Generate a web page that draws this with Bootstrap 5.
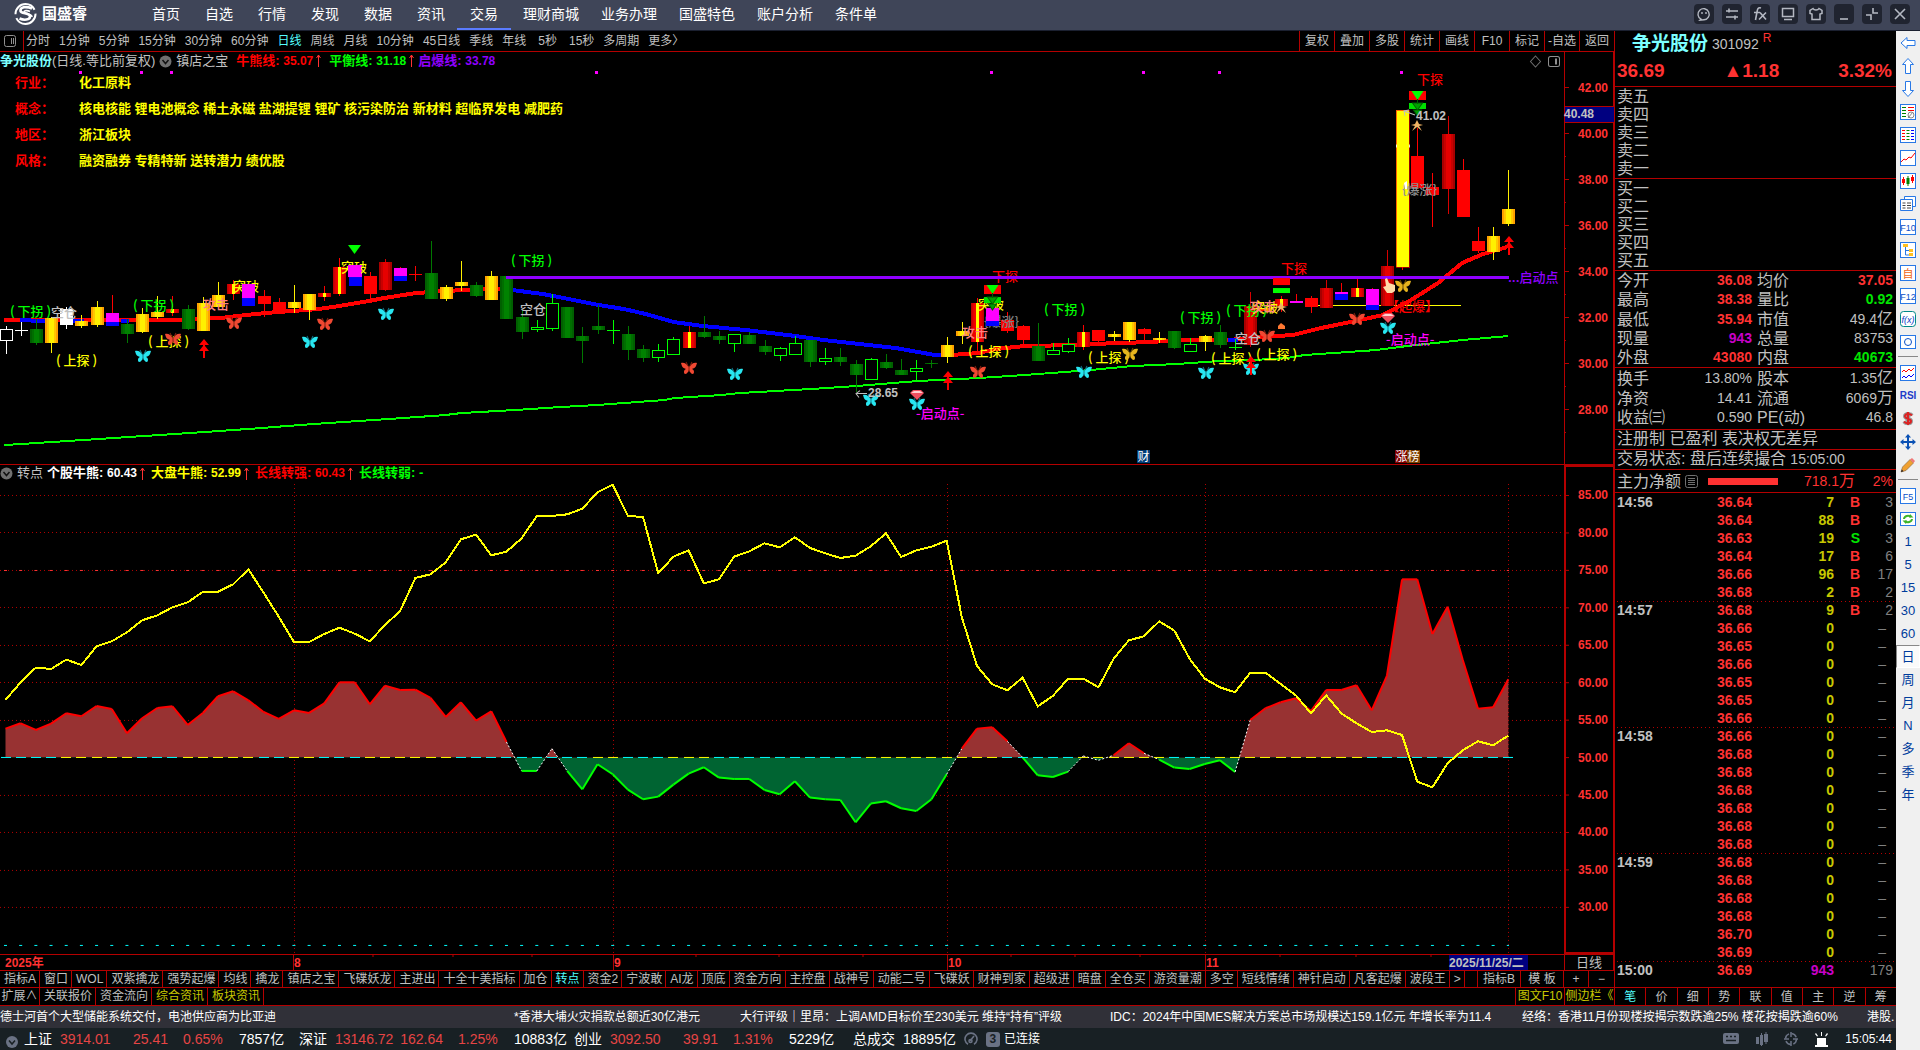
<!DOCTYPE html>
<html lang="zh-CN">
<head>
<meta charset="utf-8">
<meta name="viewport" content="width=device-width, initial-scale=1">
<title>国盛睿 - 争光股份</title>
<link href="https://cdn.jsdelivr.net/npm/bootstrap@5.3.0/dist/css/bootstrap.min.css" rel="stylesheet">
<style>
:root{--line:#b40000;--txt:#c0c0c0;--up:#ff3232;--dn:#00e600;--cyan:#54fcfc}
body{background:#000;color:var(--txt);font-family:"Liberation Sans","Noto Sans CJK SC",sans-serif;font-size:12px;line-height:16px;min-height:100vh;overflow:hidden}
button{background:none;border:0;padding:0;color:inherit;font:inherit;white-space:nowrap}
a{color:inherit;text-decoration:none}
svg{display:block}
.bd-b{border-bottom:1px solid var(--line)}
/* title bar */
.titlebar{height:31px;background:#3f4558;border-bottom:1px solid #1b2030;color:#fff;font-size:14px}
.logo{margin:2px 0 0 13px}
.brand-name{font-size:15px;font-weight:700;width:66px;line-height:27px}
.mainnav{height:30px;line-height:29px;gap:25px;margin-left:48px}
.mainnav.wide{gap:22px;margin-left:25px}
.mainnav a{height:30px;position:relative;white-space:nowrap}
.mainnav a.on::after{content:"";position:absolute;left:-13px;right:-13px;bottom:0;height:2px;background:#5b7cff}
.winbtns{gap:8px;padding-right:10px}
.winbtns button{width:20px;height:20px;border-radius:4px;background:#202430;color:#b4b8c2}
/* period bar */
.period{height:21px;line-height:20px}
.period .lst{gap:9px;padding-left:2px}
.period .sec{margin-left:3px}
.period .ico{width:24px;height:20px;border-right:1px solid var(--line);padding:4px}
.ops button{width:35px;height:20px;border-left:1px solid var(--line)}
.on-c{color:var(--cyan)}
/* charts */
.chart{position:relative;min-height:0;overflow:hidden}
.chart>svg{position:absolute;inset:0;width:100%;height:100%}
.c1{flex:413 1 0}
.c2{flex:490 1 0}
.hdr{position:relative;height:18px;line-height:18px;font-size:13px;white-space:nowrap}
.c2 .hdr{line-height:16px}
.hdr b{font-weight:700}
.hdr i{font-style:normal;font-size:12px;font-weight:700}
.hdr svg{flex:none}
.hdr .knob{margin-top:3px}
.c2 .hdr .knob{margin-top:2px}
.tags{position:relative;font-size:13px;font-weight:700;color:#ff0;margin:4px 0 0 15px;display:grid;grid-template-columns:64px auto;grid-auto-rows:26px;line-height:18px}
.tags dt{color:#f00;font-weight:700}
.tags dd{margin:0}
svg text{font-family:"Liberation Sans","Noto Sans CJK SC",sans-serif;dominant-baseline:central}
svg text.cj{font-family:"Noto Sans CJK SC",sans-serif;font-size:13px;font-weight:500}
svg text.num{font-size:12px;font-weight:700}
/* bottom strips */
.axis{height:16px;position:relative}
.axis svg{position:absolute;inset:0;width:100%;height:100%}
.tabs1{height:17px;line-height:16px}
.tabs1 button,.tabs2 button{padding:0 3px 0 4px;border-right:1px solid var(--line)}
.tabs2{height:18px;line-height:17px}
.tabs2 .fst{padding:0;width:40px}
.tabs2 .rt{padding:0;width:49px;overflow:visible}
.tabs1 .tail button{padding:0;width:25px}
.tabs1 .tail button.w{width:43px}
.tabs1 .tail{border-left:1px solid var(--line)}
.yl{color:#c8c800}
.news{height:22px;background:#303038;color:#fff;line-height:22px;white-space:nowrap;overflow:hidden}
.news a{flex:none}
.status{height:22px;background:#182024;color:#fff;font-size:14px;line-height:24px;white-space:nowrap}
.idx{display:grid;grid-template-columns:36px 60px 48px 71px 60px}
.idx :nth-child(n+2):nth-child(-n+4){color:#e64545}
.idx :nth-child(3){text-align:right}
.idx :nth-child(4){padding-left:15px}
.cnt{width:14px;height:15px;line-height:15px;border-radius:3px;background:#6a7284;color:#182024;font-size:12px;text-align:center;font-weight:700}
/* quote panel */
.quote{width:282px;border-left:1px solid var(--line);font-size:16px;line-height:18px}
.quote section{padding-left:2px}
.qname{font-size:19px;font-weight:700;color:#7cffff;margin:0;line-height:26px}
.qcode{font-size:14px}
.big{font-size:19px;font-weight:700;color:var(--up);line-height:28px;padding-right:4px}
.lv{height:92px;padding-top:1px}
table{border-collapse:collapse;table-layout:fixed;width:100%}
th{font-weight:400}
td,th{padding:0;white-space:nowrap}
.inf{line-height:19px}
.inf td{font-size:14px;text-align:right}
.inf td:last-child{padding-right:3px}
.inf th+td+th{padding-left:5px}
.inf .cj16{font-size:16px}
.bold td{font-weight:700}
.up{color:var(--up)}.dn{color:var(--dn)}.mg{color:#c800c8}
.line20{height:20px;line-height:18px;white-space:nowrap}
.line20 span{font-size:14px}
.flow{height:23px;line-height:21px}
.flowbar{width:70px;height:7px;background:var(--up);margin-left:10px}
.ticks{font-size:14px;line-height:18px;font-weight:700}
.ticks tr{height:18px}
.ticks tr.cut{background:repeating-linear-gradient(90deg,#b40000 0 1px,transparent 1px 4px) 0 0/100% 1px no-repeat}
.ticks td{text-align:right}
.ticks td:first-child{text-align:left}
.ticks .v{color:#c8c800}
.ticks .n{color:#808080;font-weight:400;padding-right:3px}
.ticks .dash{padding-right:10px}
.qtabs{height:19px;border-top:1px solid var(--line);font-size:12px;line-height:16px}
.qtabs button{flex:1;border-right:1px solid var(--line)}
.qtabs button:last-child{border-right:0}
/* tool strip */
.tools{width:24px;background:#f0f0f0;color:#003c9c;font-size:13px}
.tools button{width:24px;height:23px;display:flex;align-items:center;justify-content:center}
.tools hr{width:20px;margin:3px 2px 4px;border-top:1px solid #888;opacity:1}
.tools .press{background:#fafafa;border:1px solid #fff;border-top-color:#888;border-left-color:#888}
</style>
<script src="https://cdn.jsdelivr.net/npm/bootstrap@5.3.0/dist/js/bootstrap.bundle.min.js"></script>
</head>
<body class="d-flex flex-column vh-100">
<header class="titlebar d-flex flex-shrink-0">
  <svg class="logo" width="25" height="24" viewBox="0 0 25 24" fill="none" stroke="#fff"><circle cx="12.500" cy="12" r="10" stroke-width="2" stroke-dasharray="27 4"/><path d="M19 6.500C13 4 7 5 7.500 9c.4 3 9.500 1.500 9.500 5.500 0 3.500-6 4-10.500 2" stroke-width="2.600"/><path d="M17 9.500c-3-1.500-6-1-6 .5 0 1.500 8 1.500 8 5" stroke-width="1.600"/></svg>
  <span class="brand-name ps-1">国盛睿</span>
  <nav class="mainnav d-flex"><a href="#">首页</a><a href="#">自选</a><a href="#">行情</a><a href="#">发现</a><a href="#">数据</a><a href="#">资讯</a><a href="#" class="on">交易</a></nav>
  <nav class="mainnav wide d-flex"><a href="#">理财商城</a><a href="#">业务办理</a><a href="#">国盛特色</a><a href="#">账户分析</a><a href="#">条件单</a></nav>
  <div class="winbtns d-flex ms-auto pt-1">
    <button aria-label="客服"><svg width="20" height="20" fill="none" stroke="currentColor" stroke-width="1.400"><path d="M7 15.200a5.600 5.600 0 1 1 3 .6l-4 .4z"/><path d="M8 8v2M12 8v2"/></svg></button>
    <button aria-label="切换"><svg width="20" height="20" fill="none" stroke="currentColor" stroke-width="1.600"><path d="M4 7h12M4 13h12M7 4.500v4M13 11.500v4"/></svg></button>
    <button aria-label="公式"><svg width="20" height="20" fill="none" stroke="currentColor" stroke-width="1.600"><path d="M11 4c-3-1-3.500 1-4 4l-1.500 8M4 8.500h6M10 8.500l6 7M16 8.500l-7 7"/></svg></button>
    <button aria-label="屏幕"><svg width="20" height="20" fill="none" stroke="currentColor" stroke-width="1.500"><rect x="4.500" y="4.500" width="11" height="8"/><path d="M6 15.500h8"/></svg></button>
    <button aria-label="皮肤"><svg width="20" height="20" fill="none" stroke="currentColor" stroke-width="1.500"><path d="M7 4.500 4 6.500v3l2 .5v5.500h8V10l2-.5v-3l-3-2c-1 2-5 2-6 0z"/></svg></button>
    <button aria-label="最小化"><svg width="20" height="20" stroke="currentColor" stroke-width="1.600"><path d="M6 15h8"/></svg></button>
    <button aria-label="还原"><svg width="20" height="20" fill="none" stroke="currentColor" stroke-width="1.600"><path d="M11 4v5h5M9 16v-5H4"/></svg></button>
    <button aria-label="关闭"><svg width="20" height="20" stroke="currentColor" stroke-width="1.600"><path d="m5 5 10 10M15 5 5 15"/></svg></button>
  </div>
</header>

<div class="d-flex flex-grow-1" style="min-height:0">
 <div class="d-flex flex-column flex-grow-1" style="min-width:0">
  <div class="d-flex flex-grow-1" style="min-height:0">
   <main class="d-flex flex-column flex-grow-1" style="min-width:0">
    <div class="period bd-b d-flex flex-shrink-0">
      <button class="ico" aria-label="侧栏"><svg width="12" height="12" fill="none" stroke="#909090"><rect x=".5" y=".5" width="11" height="11" rx="2"/><path d="M7.500 3v6M9.500 3v6" stroke-width="1"/></svg></button>
      <div class="lst d-flex"><button>分时</button><button>1分钟</button><button>5分钟</button><button>15分钟</button><button>30分钟</button><button>60分钟</button><button class="on-c">日线</button><button>周线</button><button>月线</button><button>10分钟</button><button>45日线</button><button>季线</button><button>年线</button><button class="sec">5秒</button><button class="sec">15秒</button><button>多周期</button><button>更多〉</button></div>
      <div class="ops d-flex ms-auto"><button>复权</button><button>叠加</button><button>多股</button><button>统计</button><button>画线</button><button>F10</button><button>标记</button><button>-自选</button><button>返回</button></div>
    </div>

    <section class="chart c1 bd-b">
      <svg id="k"></svg>
      <div class="hdr d-flex">
        <b style="color:#7cffff">争光股份</b><span>(日线.等比前复权)</span>
        <svg class="knob ms-1 me-1" width="13" height="13"><circle cx="6.500" cy="6.500" r="6" fill="#707070"/><path d="m3.500 5 3 3.500 3-3.500" fill="none" stroke="#111" stroke-width="1.500"/></svg>
        <span>镇店之宝</span>
        <b class="ms-2" style="color:#f00">牛熊线: <i>35.07</i></b><svg width="12" height="18"><path d="M5.500 3v12M3.500 6l2-3 2 3" fill="none" stroke="#ff3232"/></svg>
        <b class="ms-1" style="color:#0f0">平衡线: <i>31.18</i></b><svg width="12" height="18"><path d="M5.500 3v12M3.500 6l2-3 2 3" fill="none" stroke="#ff3232"/></svg>
        <b style="color:#9000ff">启爆线: <i>33.78</i></b>
      </div>
      <dl class="tags"><dt>行业：</dt><dd>化工原料</dd><dt>概念：</dt><dd>核电核能 锂电池概念 稀土永磁 盐湖提锂 锂矿 核污染防治 新材料 超临界发电 减肥药</dd><dt>地区：</dt><dd>浙江板块</dd><dt>风格：</dt><dd>融资融券 专精特新 送转潜力 绩优股</dd></dl>
    </section>

    <section class="chart c2 bd-b">
      <svg id="m"></svg>
      <div class="hdr d-flex">
        <svg class="knob me-1" width="13" height="13"><circle cx="6.500" cy="6.500" r="6" fill="#707070"/><path d="m3.500 5 3 3.500 3-3.500" fill="none" stroke="#111" stroke-width="1.500"/></svg>
        <span>转点</span>
        <b class="ms-1 text-white">个股牛熊: <i>60.43</i></b><svg width="10" height="18"><path d="M5.500 3v12M3.500 6l2-3 2 3" fill="none" stroke="#ff3232"/></svg>
        <b class="ms-1" style="color:#ff0">大盘牛熊: <i>52.99</i></b><svg width="10" height="18"><path d="M5.500 3v12M3.500 6l2-3 2 3" fill="none" stroke="#ff3232"/></svg>
        <b class="ms-1" style="color:#f00">长线转强: <i>60.43</i></b><svg width="10" height="18"><path d="M5.500 3v12M3.500 6l2-3 2 3" fill="none" stroke="#ff3232"/></svg>
        <b class="ms-1" style="color:#0f0">长线转弱: -</b>
      </div>
    </section>
    <div class="axis bd-b flex-shrink-0"><svg id="t"></svg></div>
    <div class="tabs1 bd-b d-flex flex-shrink-0" id="tabs1"></div>
    <div class="tabs2 bd-b d-flex flex-shrink-0"><button class="fst">扩展∧</button><button>关联报价</button><button>资金流向</button><button class="yl">综合资讯</button><button class="yl">板块资讯</button>
      <div class="d-flex ms-auto yl" style="border-left:1px solid var(--line)"><button class="rt">图文F10</button><button class="rt border-0">侧边栏《</button></div></div>
   </main>

   <aside class="quote d-flex flex-column flex-shrink-0">
    <section class="bd-b" style="height:56px">
      <div class="d-flex align-items-center" style="padding-left:15px"><h1 class="qname">争光股份</h1><span class="qcode ms-1">301092</span><sup class="up ms-1" style="font-size:12px">R</sup></div>
      <div class="big d-flex justify-content-between"><span>36.69</span><span>▲1.18</span><span>3.32%</span></div>
    </section>
    <section class="lv bd-b"><div>卖五</div><div>卖四</div><div>卖三</div><div>卖二</div><div>卖一</div></section>
    <section class="lv bd-b"><div>买一</div><div>买二</div><div>买三</div><div>买四</div><div>买五</div></section>
    <section class="bd-b" style="height:97px"><table class="inf bold"><colgroup><col style="width:60px"><col style="width:75px"><col style="width:60px"><col></colgroup>
      <tr><th>今开</th><td class="up">36.08</td><th>均价</th><td class="up">37.05</td></tr>
      <tr><th>最高</th><td class="up">38.38</td><th>量比</th><td class="dn">0.92</td></tr>
      <tr><th>最低</th><td class="up">35.94</td><th>市值</th><td class="fw-normal">49.4<span class="cj16">亿</span></td></tr>
      <tr><th>现量</th><td class="mg">943</td><th>总量</th><td class="fw-normal">83753</td></tr>
      <tr><th>外盘</th><td class="up">43080</td><th>内盘</th><td class="dn">40673</td></tr></table></section>
    <section class="bd-b" style="height:62px"><table class="inf"><colgroup><col style="width:60px"><col style="width:75px"><col style="width:60px"><col></colgroup>
      <tr><th>换手</th><td>13.80%</td><th>股本</th><td>1.35<span class="cj16">亿</span></td></tr>
      <tr><th>净资</th><td>14.41</td><th>流通</th><td>6069<span class="cj16">万</span></td></tr>
      <tr><th>收益㈢</th><td>0.590</td><th>PE(动)</th><td>46.8</td></tr></table></section>
    <section class="line20 bd-b">注册制 已盈利 表决权无差异</section>
    <section class="line20 bd-b">交易状态: 盘后连续撮合 <span>15:05:00</span></section>
    <section class="flow bd-b d-flex align-items-center">主力净额<svg class="ms-1" width="13" height="13" stroke="#707070" fill="none"><rect x=".5" y=".5" width="12" height="12" rx="2"/><path d="M3 3.500h7M3 5.500h7M3 7.500h7M3 9.500h7"/></svg><span class="flowbar"></span><span class="up ms-auto" style="font-size:14px">718.1<span style="font-size:16px">万</span></span><span class="up text-end" style="font-size:14px;width:41px;padding-right:3px">2%</span></section>
    <section class="flex-grow-1"><table class="ticks"><colgroup><col style="width:60px"><col style="width:75px"><col style="width:82px"><col style="width:26px"><col></colgroup><tbody id="ticks"></tbody></table></section>
    <div class="qtabs bd-b d-flex"><button class="on-c">笔</button><button>价</button><button>细</button><button>势</button><button>联</button><button>值</button><button>主</button><button>逆</button><button>筹</button></div>
   </aside>
  </div>

  <div class="news d-flex flex-shrink-0"><a href="#" style="width:514px">德士河首个大型储能系统交付，电池供应商为比亚迪</a><a href="#" style="width:226px">*香港大埔火灾捐款总额近30亿港元</a><a href="#" style="width:370px">大行评级｜里昂：上调AMD目标价至230美元 维持“持有”评级</a><a href="#" style="width:412px">IDC：2024年中国MES解决方案总市场规模达159.1亿元 年增长率为11.4</a><a href="#" style="width:345px">经络：香港11月份现楼按揭宗数跌逾25% 楼花按揭跌逾60%</a><a href="#">港股.</a></div>
  <footer class="status d-flex flex-shrink-0 align-items-center">
    <svg width="24" height="22"><circle cx="12" cy="14" r="6" fill="#6a7284"/><path d="m9 12.500 3 3.500 3-3.500" fill="none" stroke="#182024" stroke-width="1.500"/></svg>
    <div class="idx"><span>上证</span><span>3914.01</span><span>25.41</span><span>0.65%</span><span>7857亿</span></div>
    <div class="idx"><span>深证</span><span>13146.72</span><span>162.64</span><span>1.25%</span><span>10883亿</span></div>
    <div class="idx"><span>创业</span><span>3092.50</span><span>39.91</span><span>1.31%</span><span>5229亿</span></div>
    <span class="ms-1">总成交</span><span class="ms-2">18895亿</span>
    <svg class="ms-2 me-2" width="14" height="14" fill="none" stroke="#6a7284" stroke-width="1.600"><path d="M4 12.300a6 6 0 1 1 6 0M6 9l4-5"/><circle cx="6.500" cy="9" r="1.500"/></svg>
    <span class="cnt">3</span><span class="ms-1" style="font-size:12px">已连接</span>
    <div class="d-flex ms-auto align-items-center pe-1">
      <svg width="17" height="12" class="me-3"><rect width="16" height="11" rx="2" fill="#6a7284"/><path d="M3 3.500h2M7 3.500h2M11 3.500h2M3 7.500h10" stroke="#182024" stroke-width="1.500"/></svg>
      <svg width="12" height="14" class="me-3" fill="#6a7284"><path d="M0 5h3v7H0zM4 3h3v10H4zM8 2h4v8H8zM5 1h1v13H5zM9.500 0h1v12h-1z"/></svg>
      <svg width="14" height="14" class="me-3" fill="none" stroke="#6a7284" stroke-width="1.500"><circle cx="7" cy="7" r="5.500" stroke-dasharray="6 2.600"/><path d="M7 0v5M7 9v5M0 7h5M9 7h5"/></svg>
      <svg width="15" height="15" class="me-3" fill="#fff"><path d="M3 6h9v7h2v2H1v-2h2zM7 0h1v4H7zM2 1l2 3-1 .5L1 2zM13 1l-2 3 1 .5L14 2z"/></svg>
      <span style="font-size:12px">15:05:44</span>
    </div>
  </footer>
 </div>

 <nav class="tools d-flex flex-column flex-shrink-0" id="tools" aria-label="工具"></nav>
</div>

<script>
/* ---------- tabs, ticks, tool strip ---------- */
const tabNames='指标A 窗口 WOL 双紫擒龙 强势起爆 均线 擒龙 镇店之宝 飞碟妖龙 主进出 十全十美指标 加仓 转点 资金2 宁波敢 AI龙 顶底 资金方向 主控盘 战神号 动能二号 飞碟妖 财神到家 超级进 暗盘 全仓买 游资量潮 多空 短线情绪 神针启动 凡客起爆 波段王'.split(' ');
document.getElementById('tabs1').innerHTML=tabNames.map(n=>`<button${n=='转点'?' class="on-c"':''}>${n}</button>`).join('')+
 '<button>&gt;</button><div class="tail d-flex ms-auto"><button class="w">指标B</button><button class="w">模 板</button><button>+</button><button class="border-0">−</button></div>';

const tk=[['14:56','36.64',7,'B',3],['','36.64',88,'B',8],['','36.63',19,'S',3],['','36.64',17,'B',6],['','36.66',96,'B',17],['','36.68',2,'B',2],
['14:57','36.68',9,'B',2],...['36.66','36.65','36.66','36.65','36.65','36.66'].map(p=>['',p,0]),
['14:58','36.66',0],...Array(6).fill(['','36.68',0]),
['14:59','36.68',0],...['36.68','36.68','36.68','36.70','36.69'].map(p=>['',p,0]),['15:00','36.69',943,'',179]];
document.getElementById('ticks').innerHTML=tk.map((r,i)=>`<tr${r[0]&&i?' class="cut"':''}><td>${r[0]}</td><td class="up">${r[1]}</td><td class="${r[2]==943?'mg':'v'}">${r[2]}</td><td class="${r[3]=='S'?'dn':'up'}">${r[3]||''}</td><td class="n${r[4]?'':' dash'}">${r[4]||'–'}</td></tr>`).join('');

const box='<rect x=".5" y=".5" width="15" height="15" fill="#fff" stroke="#2878e6"/>';
const S=s=>`<svg width="16" height="16" fill="none">${s}</svg>`;
const lab=(t,c='#0a50c8',z=9)=>S(box+`<text x="8" y="8.500" text-anchor="middle" font-size="${z}" fill="${c}">${t}</text>`);
const icons=[
 S('<path d="M1 8l6-5.500v3h8v5H7v3z" stroke="#2878e6" fill="#fff"/>'),
 S('<path d="M8 .5l5.500 6h-3v9h-5v-9h-3z" stroke="#2878e6" fill="#fff"/>'),
 S('<path d="M8 15.500l5.500-6h-3v-9h-5v9h-3z" stroke="#2878e6" fill="#fff"/>'),
 S(box+'<path d="M2 3.500h4M2 6.500h4M2 9.500h4M2 12.500h4" stroke="green"/><path d="M8 3.500h6M8 6.500h6" stroke="red"/><circle cx="11" cy="11" r="3" stroke="#888"/><path d="m8 14 5-6" stroke="#888"/>'),
 S(box+'<path d="M2 3.500h3M2 6.500h3M2 9.500h3M2 12.500h3" stroke="red"/><path d="M6.500 3.500h3M6.500 6.500h3M6.500 9.500h3M6.500 12.500h3" stroke="green"/><path d="M11 3.500h3M11 6.500h3M11 9.500h3M11 12.500h3" stroke="#00f"/>'),
 S(box+'<path d="m1 12 3-3 2 1 3-3 2 1 4-5" stroke="red"/>'),
 S(box+'<path d="M3.500 4v8M12.500 2v8" stroke="red"/><path d="M2 6h3v4H2zM11 4h3v4h-3z" fill="red"/><path d="M8 3v10" stroke="green"/><path d="M6.500 5h3v6h-3z" fill="green"/>'),
 S('<path d="M4.500.5h11v10h-11z" stroke="#2878e6" fill="#fff"/><path d="M.5 3.500h12v11H.5z" stroke="#2878e6" fill="#fff"/><path d="M2.500 7h3M7 7h4M2.500 9.500h3M7 9.500h4M2.500 12h3M7 12h4" stroke="#444"/>'),
 lab('F10'),
 S(box+'<path d="M5.500 5v8h4M5.500 8.500h4" stroke="#2878e6"/><path d="M3 2h5v3H3zM9 7h4v3H9zM9 11h4v3H9z" fill="#ffc020"/>'),
 lab('自','#f06414',11),lab('F12'),
 S('<rect x=".5" y=".5" width="15" height="15" rx="3" fill="#fff" stroke="#088"/><text x="8" y="8.500" text-anchor="middle" font-size="9" font-style="italic" fill="#0a3cc8">f(x)</text>'),
 S('<rect x=".5" y="1.500" width="15" height="13" fill="#fff" stroke="#2878e6"/><circle cx="8" cy="8" r="3.500" stroke="#0a50c8"/>'),
 'hr',
 S(box+'<path d="m2 7 2-2 2 2 3-3 2 2 3-3" stroke="red"/><path d="m2 13 2-2 2 2 3-3 2 2 3-3" stroke="#00f"/>'),
 '<span style="font-size:10px;font-weight:700;color:#1e3cc8">RSI</span>',
 S('<path d="M12 4.500C10 2 4.500 2.500 5 5.500c.5 2.500 6 2 6 4.500 0 3-5 3-7 .5M8 1v13" stroke="#999" stroke-width="4"/><path d="M12 4.500C10 2 4.500 2.500 5 5.500c.5 2.500 6 2 6 4.500 0 3-5 3-7 .5M8 1v13" stroke="#d22" stroke-width="2"/>'),
 S('<path d="M8 0l3 3.500H9V7h3.500V5L16 8l-3.500 3V9H9v3.500h2L8 16l-3-3.500h2V9H3.500v2L0 8l3.500-3v2H7V3.500H5z" fill="#0a50b4"/>'),
 S('<path d="m1 15 1.500-5L10 2.500l3.500 3.500L6 13.500z" fill="#f0a030" stroke="#806040" stroke-width=".6"/><path d="M10 2.500 12 1l3 3-1.500 2z" fill="#f07878"/><path d="m1 15 .8-2.500 1.700 1.700z" fill="#222"/>'),
 'hr',lab('F5'),
 S('<rect x=".5" y="1.500" width="15" height="13" fill="#fff" stroke="#2878e6"/><path d="M4 8a4 3.500 0 0 1 7-2M12 8a4 3.500 0 0 1-7 2" stroke="#3cb428" stroke-width="2"/><path d="M10 3l3.500 3.500H9zM6 13 2.500 9.500H7z" fill="#3cb428"/>'),
 '1','5','15','30','60','日','周','月','N','多','季','年'];
document.getElementById('tools').innerHTML=icons.map(i=>i=='hr'?'<hr>':`<button${i=='日'?' class="press"':''}>${i}</button>`).join('');

/* ---------- charts: drawn on a 1564-wide base and scaled to the window ---------- */
const BW=1564, bx=i=>5.5+15.18*i;
const RED='#b40000';
/* type, high, body top, body bottom, low [, split] */
const K=`W 326 329 340 354|w 322 330 331 336|G 319 329 343 345|Y 317 318 343 353|S 307 309 325 329|Y 315 321 326 328|Y 301 307 325 327|M 295 313 326 326 322|G 319 324 334 343|Y 308 314 332 333|Y 296 312 317 319|X 296 309 313 316|G 305 309 329 330|Y 297 303 331 331|Y 282 295 307 307|X 280 284 294 300|M 284 284 306 306 298|R 290 296 304 317|R 298 302 313 313|Y 285 302 308 313|Y 294 294 310 320|X 286 293 297 301|X 258 267 294 296|M 265 265 286 286 277|R 272 276 294 300|D 259 262 290 291|M 267 268 281 281 276|R 266 274 275 281|G 241 273 299 299|Y 285 287 299 301|Y 261 282 286 291|G 282 285 296 297|Y 271 276 300 300|G 276 276 319 319|G 310 317 332 339|H 320 327 329 332|H 294 303 328 331|G 307 307 338 338|G 327 336 341 363|G 305 326 330 334|H 320 330 331 344|G 326 334 350 360|G 345 349 358 362|H 344 350 357 362|H 337 339 354 354|X 326 332 348 348|G 316 332 337 338|G 331 336 340 344|H 334 334 343 352|G 332 335 344 344|G 340 346 352 355|H 347 348 355 361|H 336 343 354 354|G 340 340 362 367|H 348 358 361 365|G 348 357 362 366|G 360 364 375 392|H 358 359 379 379|G 354 362 368 369|G 359 370 375 375|H 360 368 371 381|G 360 363 364 368|Y 337 345 357 363|Y 322 331 336 344|X 298 303 342 351|M 308 308 326 326 321|R 312 320 331 333|R 325 326 340 344|G 323 346 361 361|H 343 350 354 355|H 338 344 351 353|X 325 332 347 350|R 330 330 341 342|Y 331 334 337 341|Y 322 322 340 342|R 328 329 334 340|Y 332 338 340 343|G 331 331 348 349|H 338 344 351 351|Y 335 336 342 351|G 325 332 345 348|H 339 347 348 350|D 292 306 345 347|R 306 308 311 313|X 296 299 306 312|M 294 301 303 303 303|R 296 298 307 313|D 280 288 308 308|M 283 292 300 300 294|X 279 288 297 297|M 288 289 310 310 305|D 250 266 306 306|B 110 110 267 270|R 128 156 188 188|R 173 187 195 227|D 116 134 189 214|R 159 170 217 217|R 227 241 251 253|Y 227 236 252 260|Y 170 209 224 226`.split('|').map(s=>{const a=s.split(' ');return [a[0],...a.slice(1).map(Number)]});
const WICK={W:'#fff',w:'#fff',S:'#fff',G:'#007800',H:'#00ff00',Y:'#fff000',R:'#f00',D:'#d80000',X:'#f00',M:'#f00',B:'#f00'};
const butter=(x,y,c,d)=>`<g transform="translate(${x} ${y})"><path d="M0-1C-2-4-5-6-8-5c1 4 2 5 5 6-3 1-2 5-1 5 2 0 3-2 4-4 1 2 2 4 4 4 1 0 2-4-1-5 3-1 4-2 5-6-3-1-6 1-8 4z" fill="${c}"/><path d="M-1-2-3-6M1-2 3-6M0-2v6" stroke="${d}" fill="none"/></g>`;
const arrows=(x,y)=>`<path d="M${x} ${y}l5 6h-4v1l4 5h-4v7h-2v-7h-4l4-5v-1h-4z" fill="#f00"/>`;
const stack=(x,y)=>`<path d="M${x-8.5} ${y}h17v9h-17z" fill="#f00"/><path d="M${x-8.5} ${y+12}h17v6h-17z" fill="#00e000"/><path d="M${x-6} ${y}h12l-6 9z" fill="#0f0"/><path d="M${x} ${y+8}v5M${x-5} ${y+12}h10l-5 7zM${x-4} ${y+19}h8l-4 6z" fill="#00a000" stroke="#006000"/>`;
const man=(x,y)=>`<path d="M${x} ${y-5}l2 4 4 1-4 1 3 5-5-4-5 4 3-5-4-1 4-1z" fill="#f0b464"/>`;
const gem=(x,y)=>`<path d="M${x-7} ${y-2}l3-3h8l3 3-7 7z" fill="#f05060"/><path d="M${x-6} ${y-2}h12l-3-2h-6z" fill="#ffd0d0"/>`;
const pl=(a,c,w)=>`<polyline points="${a}" fill="none" stroke="${c}" stroke-width="${w}" shape-rendering="crispEdges"/>`;
const tx=(x,y,s,c)=>`<text class="cj" x="${x}" y="${y}" fill="${c}">${s}</text>`;

function priceChart(W,H){
 const sx=(W-50)/BW, sy=H/412, y0=52;
 const st=(o,c)=>`<stop offset="${o}" stop-color="${c}"/>`;
 let g='<defs>'+[['G','#006000','#006e00','#008200'],['Y','#ffa000','#ffc800','#fff000'],['D','#a80000','#c80000','#e60000']].map(q=>`<linearGradient id="g${q[0]}">${st(0,q[1])+st(.15,q[1])+st(.15,q[2])+st(.3,q[2])+st(.3,q[3])+st(.7,q[3])+st(.7,q[2])+st(.85,q[2])+st(.85,q[1])+st(1,q[1])}</linearGradient>`).join('')+`<linearGradient id="gX">${st(0,'#b40000')+st(.2,'#e60000')+st(.38,'#f00')+st(.38,'#ff0')+st(.62,'#ff0')+st(.62,'#f00')+st(.8,'#e60000')+st(1,'#b40000')}</linearGradient></defs>`;
 g+=`<g transform="scale(${sx} ${sy}) translate(0 ${-y0})">`;
 [80,141,171,596,991,1143,1219,1401].forEach(x=>g+=`<rect x="${x-1}" y="71" width="3" height="3" fill="#f0f"/>`);
 g+='<path d="M1318 305.500H1461" stroke="#ff0"/>';
 g+=pl('4,320 172,320 220,318 237,316 265,313 318,309 339,306 369,301 384,298 416,293 445,291 482,289 505,289','#f00',4);
 g+=pl('20,320 45,321','#00f',4)+pl('72,321 84,321','#00f',4)+pl('121,321 129,321','#00f',4);
 g+=pl('505,289 520,291 543,294 574,300 599,305 624,309 646,314 674,322 703,326 746,330 796,336 824,340 860,344 896,348 935,355 950,355','#00f',4);
 g+=pl('950,355 978,353 996,349 1024,346 1074,345 1090,344 1149,342 1183,340 1228,340 1275,336 1293,335 1321,328 1355,321 1383,315 1411,300 1438,283 1462,263 1483,254 1507,247','#f00',4)+pl('1228,340 1238,340','#00f',4);
 g+=pl('4,445 20,444 82,440 143,436 204,432 261,428 286,426 327,423 388,419 445,415 461,413 514,410 560,407 596,405 664,400 674,398 721,395 739,393 810,389 856,386 917,381 978,378 1024,375 1090,370 1132,366 1176,364 1218,361 1252,360 1287,358 1304,355 1376,350 1407,346 1462,340 1508,336','#0f0',2);
 K.forEach(([t,h,a,b,l,s],i)=>{
  const x=Math.round(bx(i)),c=WICK[t];
  g+=`<g shape-rendering="crispEdges"><path d="M${x+.5} ${h}V${l}" stroke="${c}"/>`;
  const R=(y,hh,f)=>`<rect x="${x-6}" y="${y}" width="13" height="${Math.max(1,hh)}" fill="${f}"/>`;
  if(t=='H'||t=='W')g+=b-a<2?R(a,b-a,c):`<rect x="${x-5.5}" y="${a+.5}" width="12" height="${b-a}" fill="#000" stroke="${c}"/>`;
  else if(t=='M')g+=R(a,s-a,'#f0f')+(b>s?R(s,b-s,'#00f'):'');
  else if(t=='S'||t=='w')g+=R(a,b-a,'#fff');
  else if(t=='R')g+=R(a,b-a,'#f00');
  else if(t=='B')g+=`<rect x="${x-6}" y="${a}" width="13" height="${b-a}" fill="#ff0" stroke="#f00" stroke-width=".6"/>`;
  else g+=R(a,b-a,`url(#g${t})`);
  g+='</g>';
 });
 g+=[[10,311],[133,305],[511,260],[1044,309],[1180,317],[1226,310]].map(p=>tx(p[0],p[1]-1,'( 下拐 )','#0f0')).join('');
 g+=[[51,311],[520,308],[1235,337]].map(p=>tx(...p,'空仓','#c0c0c0')).join('');
 g+=[[56,360],[148,341],[968,351],[1088,357],[1211,358],[1256,354]].map(p=>tx(p[0],p[1]-1,'( 上探 )','#ff0')).join('');
 g+=tx(233,285,'突破','#ff0')+tx(341,266,'突破','#ff0')+tx(978,303,'突破','#ff0')+tx(1252,306,'突破','#ff0');
 g+=tx(203,303,'攻击','#ff8080')+tx(962,331,'攻击','#ff8080')+tx(1250,305,'攻击','#ff8080');
 g+=tx(992,275,'下探','#f00')+tx(1281,267,'下探','#f00')+tx(1417,79,'下探','#f00');
 g+='<rect x="348" y="265" width="13" height="12" fill="#f0f"/><rect x="242" y="284" width="13" height="14" fill="#f0f"/>';
 g+=tx(984,320,'{爆涨}','#808080')+`<rect x="986" y="308" width="13" height="13" fill="#f0f"/><rect x="986" y="321" width="13" height="5" fill="#00f"/>`+tx(1402,188,'{爆涨}','#909090')+tx(1386,305,'【起爆】','#f00');
 g+=pl('506,277 1509,277','#9000ff',3)+tx(1508,276,'...启动点','#9000ff');
 g+=tx(916,412,'-启动点-','#f0f')+tx(1386,338,'-启动点-','#f0f');
 g+='<path d="M348 245h13l-6.500 9z" fill="#0f0"/>'+stack(992.5,285)+stack(1417.5,91)+'<path d="M1273 278h17v7h-17z" fill="#f00"/><path d="M1273 288h17v5h-17z" fill="#0f0"/>';
 g+=man(1417,125)+man(1281,307)+'<path d="M1278 329v-3l3-3 4 3v3z" fill="#ff7832"/><path d="M1385 279l2-1 2 5 6 2v6l-3 2h-5l-4-6 3-1z" fill="#ffdca8"/><ellipse cx="1403" cy="146" rx="7" ry="4" fill="#fff"/><rect x="1397" y="136" width="12" height="20" fill="#ff0"/><path d="M1404 183l3-2v8h-2z" fill="#fff"/>';
 [[173,339],[234,323],[325,324],[689,368],[978,372],[1267,336],[1357,319]].forEach(p=>g+=butter(...p,'#f04832','#802010'));
 [[143,356],[310,342],[386,314],[735,374],[871,400],[917,404],[1084,372],[1206,373],[1251,369],[1388,328]].forEach(p=>g+=butter(...p,'#28e6f0','#107888'));
 [[1130,354],[1403,286]].forEach(p=>g+=butter(...p,'#e6b41e','#705000'));
 g+=gem(917,395)+gem(1388,318)+arrows(204,339)+arrows(948,371)+arrows(1251,356)+arrows(1509,236);
 g+='<text class="num" x="1416" y="116" fill="#c0c0c0">41.02</text><text class="num" x="868" y="393" fill="#c0c0c0">28.65</text><path d="M867 393.500h-11m4-3-4 3 3 4M1415 115l-11-4m5-1-5 1 1 5" stroke="#c0c0c0" fill="none"/>';
 [[1137,'财','#003c78'],[1395,'涨','#800000'],[1407,'榜','#804000']].forEach(q=>g+=`<rect x="${q[0]}" y="450" width="13" height="13" fill="${q[2]}"/><text x="${q[0]+.5}" y="456.500" font-size="12" fill="#fff">${q[1]}</text>`);
 g+='<path d="M1535.500 56l5 5.500-5 5.500-5-5.500z" fill="none" stroke="#707070"/><rect x="1548.500" y="56.500" width="11" height="10" rx="2" fill="none" stroke="#909090"/><path d="M1556 58.500v6" stroke="#909090" stroke-width="2"/></g>';
 /* price axis */
 const ax=W-50; g+=`<g shape-rendering="crispEdges"><path d="M${ax+.5} 0V${H}M${W-.5} 0V${H}" stroke="${RED}"/>`;
 for(let i=0;i<8;i++){const y=(87.5+46*i-y0)*sy;g+=`<path d="M${ax} ${y}h5M${ax} ${y+23*sy}h2" stroke="${RED}"/><text class="num" x="${W-6}" y="${y}" text-anchor="end" fill="#ff3232">${42-2*i}.00</text>`;}
 g+=`<rect x="${ax}" y="${54.5*sy}" width="50" height="16" fill="#000080" stroke="${RED}"/></g><text class="num" x="${ax}" y="${62*sy}" fill="#c0c0c0">40.48</text>`;
 document.getElementById('k').innerHTML=g;
}

const L1=[720,667,623,627,599,615,559,544,517,481,466,442,427,396,395,373,328,398,470,546,546,522,503,521,544,495,453,354,343,307,238,224,286,275,235,168,168,163,146,97,74,168,171,340,290,271,370,358,290,274,250,262,232,264,280,294,287,259,220,291,271,260,242,472,618,673,691,653,739,708,656,656,682,596,541,529,484,512,596,656,682,697,638,638,672,706,760,706,760,790,816,811,825,965,982,910,871,844,856,827];
const L2=[806,790,810,791,760,769,738,747,820,775,744,739,795,759,709,694,721,756,777,751,759,730,667,667,733,677,690,689,714,771,727,782,754,846,933,933,866,933,988,913,943,989,1018,1010,974,941,922,953,957,957,990,1003,964,1013,1018,1020,1087,1031,1024,1045,1053,1018,943,866,806,802,844,892,946,951,935,888,901,886,850,880,899,923,927,912,901,936,780,745,727,715,753,690,690,676,751,648,358,358,522,440,600,746,742,658];
function bullChart(W,H){
 const sx=(W-50)/BW, sy=H/489, y0=465, Y=v=>460+v/3;
 let g=`<g transform="scale(${sx} ${sy}) translate(0 ${-y0})">`;
 g+=`<g stroke="#b40000" stroke-dasharray="1 3" shape-rendering="crispEdges">`;
 for(let i=0;i<12;i++)if(i!=7)g+=`<path d="M0 ${Math.round(495+37.45*i)+.5}H1564"/>`;
 [294,613,947,1205,1508].forEach(x=>g+=`<path d="M${x+.5} 484V954"/>`);
 g+='</g>';
 g+=`<path d="M4 570.500H1509" stroke="#f33" stroke-dasharray="3 12.180" shape-rendering="crispEdges"/><path d="M4 945.500H1509" stroke="#00ffff" stroke-dasharray="3 12.180" shape-rendering="crispEdges"/>`;
 const pts=L2.map((v,i)=>`${bx(i)},${Y(v)}`).join(' ');
 const area=`M5.500 757.500L${pts.replace(/ /g,'L')}L${bx(99)} 757.500Z`;
 g+=`<clipPath id="ca"><rect x="0" y="460" width="1564" height="297.500"/></clipPath><clipPath id="cb"><rect x="0" y="757.500" width="1564" height="200"/></clipPath><path d="${area}" fill="#983232" clip-path="url(#ca)"/><path d="${area}" fill="#006432" clip-path="url(#cb)"/>`;
 for(let i=0;i<99;i++){const a=L2[i],b=L2[i+1],u=a<892,v=b<892;
  g+=`<path d="M${bx(i)} ${Y(a)}L${bx(i+1)} ${Y(b)}" stroke="${u!=v?'#fff':u?'#f00':'#0f0'}" stroke-width="${u!=v?1:2}" ${u!=v?'stroke-dasharray="2 2"':''}/>`;}
 const yel=[[4,8],[12,16],[19,20],[24,29],[39,40],[44,46],[57,65],[71,76],[80,89]];
 for(let i=0;i<100;i++){const y=yel.some(r=>i>=r[0]&&i<=r[1]);g+=`<path d="M${Math.round(bx(i))-5} 757.500h10" stroke="${y?'#ff0':'#0ff'}" shape-rendering="crispEdges"/>`;}
 g+=pl(L1.map((v,i)=>`${bx(i)},${Y(v)}`).join(' '),'#ff0',2)+'</g>';
 const ax=W-50; g+=`<rect x="${ax+1}" y="1" width="49" height="${H-2}" fill="none" stroke="${RED}" stroke-width="2" shape-rendering="crispEdges"/>`;
 for(let i=0;i<12;i++){const y=(495.5+37.45*i-y0)*sy;g+=`<path d="M${ax} ${y}h5M${ax} ${y+18.7*sy}h2" stroke="${RED}"/><text class="num" x="${W-6}" y="${y}" text-anchor="end" fill="#ff3232">${85-5*i}.00</text>`;}
 document.getElementById('m').innerHTML=g;
}
function timeAxis(W){
 const s=(W-50)/BW; let g='';
 [[293,'8'],[613,'9'],[947,'10'],[1205,'11']].forEach(q=>g+=`<path d="M${q[0]*s+.5} 0v16" stroke="${RED}"/><text class="num" x="${q[0]*s+1}" y="8" fill="#ff3232">${q[1]}</text>`);
 [373,453,532,696,779,863,1011,1075,1140,1280,1356,1431].forEach(x=>g+=`<path d="M${x*s} 0v2" stroke="${RED}"/>`);
 g+=`<text class="num" x="5" y="8" fill="#ff3232">2025年</text><rect x="${1449*s}" y="0" width="79" height="15" fill="#000080"/><text class="num" x="${1449*s}" y="7.500" fill="#c0c0c0">2025/11/25/二</text><path d="M${W-49.5} 0v16M${W-.5} 0v16" stroke="${RED}"/><text x="${W-25}" y="7.500" font-size="13" text-anchor="middle" fill="#c0c0c0">日线</text>`;
 document.getElementById('t').innerHTML=g;
}
function draw(){
 const a=document.getElementById('k').getBoundingClientRect(),b=document.getElementById('m').getBoundingClientRect();
 priceChart(a.width,a.height);bullChart(b.width,b.height);timeAxis(a.width);
}
draw();addEventListener('resize',draw);
</script>
</body>
</html>
